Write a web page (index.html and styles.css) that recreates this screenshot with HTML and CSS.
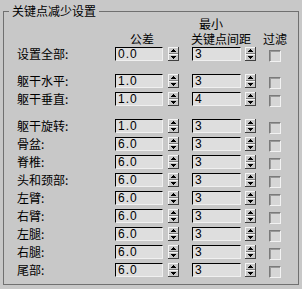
FILE: index.html
```html
<!DOCTYPE html>
<html>
<head>
<meta charset="utf-8">
<link rel="stylesheet" href="styles.css">
</head>
<body>
<fieldset class="group">
  <legend class="title">关键点减少设置</legend>
  <div class="head">
    <div class="h-tol">公差</div>
    <div class="h-min"><span class="l1">最小</span><span class="l2">关键点间距</span></div>
    <div class="h-filter">过滤</div>
  </div>
  <div class="rows">
    <div class="row"><span class="label">设置全部:</span><span class="field">0.0</span><span class="spin"><svg width="11" height="14" viewBox="0 0 11 14" shape-rendering="crispEdges"><rect width="11" height="14" fill="#c8c8c8"/><rect x="0" y="0" width="11" height="1" fill="#f4f4f4"/><rect x="0" y="0" width="1" height="14" fill="#f4f4f4"/><rect x="0" y="13" width="11" height="1" fill="#404040"/><rect x="10" y="0" width="1" height="14" fill="#404040"/><rect x="1" y="6" width="9" height="1" fill="#808080"/><rect x="1" y="7" width="9" height="1" fill="#f4f4f4"/><rect x="5" y="2" width="1" height="1" fill="#000"/><rect x="4" y="3" width="3" height="1" fill="#000"/><rect x="3" y="4" width="5" height="1" fill="#000"/><rect x="3" y="9" width="5" height="1" fill="#000"/><rect x="4" y="10" width="3" height="1" fill="#000"/><rect x="5" y="11" width="1" height="1" fill="#000"/></svg></span><span class="field f2">3</span><span class="spin"><svg width="11" height="14" viewBox="0 0 11 14" shape-rendering="crispEdges"><rect width="11" height="14" fill="#c8c8c8"/><rect x="0" y="0" width="11" height="1" fill="#f4f4f4"/><rect x="0" y="0" width="1" height="14" fill="#f4f4f4"/><rect x="0" y="13" width="11" height="1" fill="#404040"/><rect x="10" y="0" width="1" height="14" fill="#404040"/><rect x="1" y="6" width="9" height="1" fill="#808080"/><rect x="1" y="7" width="9" height="1" fill="#f4f4f4"/><rect x="5" y="2" width="1" height="1" fill="#000"/><rect x="4" y="3" width="3" height="1" fill="#000"/><rect x="3" y="4" width="5" height="1" fill="#000"/><rect x="3" y="9" width="5" height="1" fill="#000"/><rect x="4" y="10" width="3" height="1" fill="#000"/><rect x="5" y="11" width="1" height="1" fill="#000"/></svg></span><span class="check"></span></div>

    <div class="row sep"><span class="label">躯干水平:</span><span class="field">1.0</span><span class="spin"><svg width="11" height="14" viewBox="0 0 11 14" shape-rendering="crispEdges"><rect width="11" height="14" fill="#c8c8c8"/><rect x="0" y="0" width="11" height="1" fill="#f4f4f4"/><rect x="0" y="0" width="1" height="14" fill="#f4f4f4"/><rect x="0" y="13" width="11" height="1" fill="#404040"/><rect x="10" y="0" width="1" height="14" fill="#404040"/><rect x="1" y="6" width="9" height="1" fill="#808080"/><rect x="1" y="7" width="9" height="1" fill="#f4f4f4"/><rect x="5" y="2" width="1" height="1" fill="#000"/><rect x="4" y="3" width="3" height="1" fill="#000"/><rect x="3" y="4" width="5" height="1" fill="#000"/><rect x="3" y="9" width="5" height="1" fill="#000"/><rect x="4" y="10" width="3" height="1" fill="#000"/><rect x="5" y="11" width="1" height="1" fill="#000"/></svg></span><span class="field f2">3</span><span class="spin"><svg width="11" height="14" viewBox="0 0 11 14" shape-rendering="crispEdges"><rect width="11" height="14" fill="#c8c8c8"/><rect x="0" y="0" width="11" height="1" fill="#f4f4f4"/><rect x="0" y="0" width="1" height="14" fill="#f4f4f4"/><rect x="0" y="13" width="11" height="1" fill="#404040"/><rect x="10" y="0" width="1" height="14" fill="#404040"/><rect x="1" y="6" width="9" height="1" fill="#808080"/><rect x="1" y="7" width="9" height="1" fill="#f4f4f4"/><rect x="5" y="2" width="1" height="1" fill="#000"/><rect x="4" y="3" width="3" height="1" fill="#000"/><rect x="3" y="4" width="5" height="1" fill="#000"/><rect x="3" y="9" width="5" height="1" fill="#000"/><rect x="4" y="10" width="3" height="1" fill="#000"/><rect x="5" y="11" width="1" height="1" fill="#000"/></svg></span><span class="check"></span></div>

    <div class="row"><span class="label">躯干垂直:</span><span class="field">1.0</span><span class="spin"><svg width="11" height="14" viewBox="0 0 11 14" shape-rendering="crispEdges"><rect width="11" height="14" fill="#c8c8c8"/><rect x="0" y="0" width="11" height="1" fill="#f4f4f4"/><rect x="0" y="0" width="1" height="14" fill="#f4f4f4"/><rect x="0" y="13" width="11" height="1" fill="#404040"/><rect x="10" y="0" width="1" height="14" fill="#404040"/><rect x="1" y="6" width="9" height="1" fill="#808080"/><rect x="1" y="7" width="9" height="1" fill="#f4f4f4"/><rect x="5" y="2" width="1" height="1" fill="#000"/><rect x="4" y="3" width="3" height="1" fill="#000"/><rect x="3" y="4" width="5" height="1" fill="#000"/><rect x="3" y="9" width="5" height="1" fill="#000"/><rect x="4" y="10" width="3" height="1" fill="#000"/><rect x="5" y="11" width="1" height="1" fill="#000"/></svg></span><span class="field f2">4</span><span class="spin"><svg width="11" height="14" viewBox="0 0 11 14" shape-rendering="crispEdges"><rect width="11" height="14" fill="#c8c8c8"/><rect x="0" y="0" width="11" height="1" fill="#f4f4f4"/><rect x="0" y="0" width="1" height="14" fill="#f4f4f4"/><rect x="0" y="13" width="11" height="1" fill="#404040"/><rect x="10" y="0" width="1" height="14" fill="#404040"/><rect x="1" y="6" width="9" height="1" fill="#808080"/><rect x="1" y="7" width="9" height="1" fill="#f4f4f4"/><rect x="5" y="2" width="1" height="1" fill="#000"/><rect x="4" y="3" width="3" height="1" fill="#000"/><rect x="3" y="4" width="5" height="1" fill="#000"/><rect x="3" y="9" width="5" height="1" fill="#000"/><rect x="4" y="10" width="3" height="1" fill="#000"/><rect x="5" y="11" width="1" height="1" fill="#000"/></svg></span><span class="check"></span></div>

    <div class="row sep"><span class="label">躯干旋转:</span><span class="field">1.0</span><span class="spin"><svg width="11" height="14" viewBox="0 0 11 14" shape-rendering="crispEdges"><rect width="11" height="14" fill="#c8c8c8"/><rect x="0" y="0" width="11" height="1" fill="#f4f4f4"/><rect x="0" y="0" width="1" height="14" fill="#f4f4f4"/><rect x="0" y="13" width="11" height="1" fill="#404040"/><rect x="10" y="0" width="1" height="14" fill="#404040"/><rect x="1" y="6" width="9" height="1" fill="#808080"/><rect x="1" y="7" width="9" height="1" fill="#f4f4f4"/><rect x="5" y="2" width="1" height="1" fill="#000"/><rect x="4" y="3" width="3" height="1" fill="#000"/><rect x="3" y="4" width="5" height="1" fill="#000"/><rect x="3" y="9" width="5" height="1" fill="#000"/><rect x="4" y="10" width="3" height="1" fill="#000"/><rect x="5" y="11" width="1" height="1" fill="#000"/></svg></span><span class="field f2">3</span><span class="spin"><svg width="11" height="14" viewBox="0 0 11 14" shape-rendering="crispEdges"><rect width="11" height="14" fill="#c8c8c8"/><rect x="0" y="0" width="11" height="1" fill="#f4f4f4"/><rect x="0" y="0" width="1" height="14" fill="#f4f4f4"/><rect x="0" y="13" width="11" height="1" fill="#404040"/><rect x="10" y="0" width="1" height="14" fill="#404040"/><rect x="1" y="6" width="9" height="1" fill="#808080"/><rect x="1" y="7" width="9" height="1" fill="#f4f4f4"/><rect x="5" y="2" width="1" height="1" fill="#000"/><rect x="4" y="3" width="3" height="1" fill="#000"/><rect x="3" y="4" width="5" height="1" fill="#000"/><rect x="3" y="9" width="5" height="1" fill="#000"/><rect x="4" y="10" width="3" height="1" fill="#000"/><rect x="5" y="11" width="1" height="1" fill="#000"/></svg></span><span class="check"></span></div>

    <div class="row"><span class="label">骨盆:</span><span class="field">6.0</span><span class="spin"><svg width="11" height="14" viewBox="0 0 11 14" shape-rendering="crispEdges"><rect width="11" height="14" fill="#c8c8c8"/><rect x="0" y="0" width="11" height="1" fill="#f4f4f4"/><rect x="0" y="0" width="1" height="14" fill="#f4f4f4"/><rect x="0" y="13" width="11" height="1" fill="#404040"/><rect x="10" y="0" width="1" height="14" fill="#404040"/><rect x="1" y="6" width="9" height="1" fill="#808080"/><rect x="1" y="7" width="9" height="1" fill="#f4f4f4"/><rect x="5" y="2" width="1" height="1" fill="#000"/><rect x="4" y="3" width="3" height="1" fill="#000"/><rect x="3" y="4" width="5" height="1" fill="#000"/><rect x="3" y="9" width="5" height="1" fill="#000"/><rect x="4" y="10" width="3" height="1" fill="#000"/><rect x="5" y="11" width="1" height="1" fill="#000"/></svg></span><span class="field f2">3</span><span class="spin"><svg width="11" height="14" viewBox="0 0 11 14" shape-rendering="crispEdges"><rect width="11" height="14" fill="#c8c8c8"/><rect x="0" y="0" width="11" height="1" fill="#f4f4f4"/><rect x="0" y="0" width="1" height="14" fill="#f4f4f4"/><rect x="0" y="13" width="11" height="1" fill="#404040"/><rect x="10" y="0" width="1" height="14" fill="#404040"/><rect x="1" y="6" width="9" height="1" fill="#808080"/><rect x="1" y="7" width="9" height="1" fill="#f4f4f4"/><rect x="5" y="2" width="1" height="1" fill="#000"/><rect x="4" y="3" width="3" height="1" fill="#000"/><rect x="3" y="4" width="5" height="1" fill="#000"/><rect x="3" y="9" width="5" height="1" fill="#000"/><rect x="4" y="10" width="3" height="1" fill="#000"/><rect x="5" y="11" width="1" height="1" fill="#000"/></svg></span><span class="check"></span></div>

    <div class="row"><span class="label">脊椎:</span><span class="field">6.0</span><span class="spin"><svg width="11" height="14" viewBox="0 0 11 14" shape-rendering="crispEdges"><rect width="11" height="14" fill="#c8c8c8"/><rect x="0" y="0" width="11" height="1" fill="#f4f4f4"/><rect x="0" y="0" width="1" height="14" fill="#f4f4f4"/><rect x="0" y="13" width="11" height="1" fill="#404040"/><rect x="10" y="0" width="1" height="14" fill="#404040"/><rect x="1" y="6" width="9" height="1" fill="#808080"/><rect x="1" y="7" width="9" height="1" fill="#f4f4f4"/><rect x="5" y="2" width="1" height="1" fill="#000"/><rect x="4" y="3" width="3" height="1" fill="#000"/><rect x="3" y="4" width="5" height="1" fill="#000"/><rect x="3" y="9" width="5" height="1" fill="#000"/><rect x="4" y="10" width="3" height="1" fill="#000"/><rect x="5" y="11" width="1" height="1" fill="#000"/></svg></span><span class="field f2">3</span><span class="spin"><svg width="11" height="14" viewBox="0 0 11 14" shape-rendering="crispEdges"><rect width="11" height="14" fill="#c8c8c8"/><rect x="0" y="0" width="11" height="1" fill="#f4f4f4"/><rect x="0" y="0" width="1" height="14" fill="#f4f4f4"/><rect x="0" y="13" width="11" height="1" fill="#404040"/><rect x="10" y="0" width="1" height="14" fill="#404040"/><rect x="1" y="6" width="9" height="1" fill="#808080"/><rect x="1" y="7" width="9" height="1" fill="#f4f4f4"/><rect x="5" y="2" width="1" height="1" fill="#000"/><rect x="4" y="3" width="3" height="1" fill="#000"/><rect x="3" y="4" width="5" height="1" fill="#000"/><rect x="3" y="9" width="5" height="1" fill="#000"/><rect x="4" y="10" width="3" height="1" fill="#000"/><rect x="5" y="11" width="1" height="1" fill="#000"/></svg></span><span class="check"></span></div>

    <div class="row"><span class="label">头和颈部:</span><span class="field">6.0</span><span class="spin"><svg width="11" height="14" viewBox="0 0 11 14" shape-rendering="crispEdges"><rect width="11" height="14" fill="#c8c8c8"/><rect x="0" y="0" width="11" height="1" fill="#f4f4f4"/><rect x="0" y="0" width="1" height="14" fill="#f4f4f4"/><rect x="0" y="13" width="11" height="1" fill="#404040"/><rect x="10" y="0" width="1" height="14" fill="#404040"/><rect x="1" y="6" width="9" height="1" fill="#808080"/><rect x="1" y="7" width="9" height="1" fill="#f4f4f4"/><rect x="5" y="2" width="1" height="1" fill="#000"/><rect x="4" y="3" width="3" height="1" fill="#000"/><rect x="3" y="4" width="5" height="1" fill="#000"/><rect x="3" y="9" width="5" height="1" fill="#000"/><rect x="4" y="10" width="3" height="1" fill="#000"/><rect x="5" y="11" width="1" height="1" fill="#000"/></svg></span><span class="field f2">3</span><span class="spin"><svg width="11" height="14" viewBox="0 0 11 14" shape-rendering="crispEdges"><rect width="11" height="14" fill="#c8c8c8"/><rect x="0" y="0" width="11" height="1" fill="#f4f4f4"/><rect x="0" y="0" width="1" height="14" fill="#f4f4f4"/><rect x="0" y="13" width="11" height="1" fill="#404040"/><rect x="10" y="0" width="1" height="14" fill="#404040"/><rect x="1" y="6" width="9" height="1" fill="#808080"/><rect x="1" y="7" width="9" height="1" fill="#f4f4f4"/><rect x="5" y="2" width="1" height="1" fill="#000"/><rect x="4" y="3" width="3" height="1" fill="#000"/><rect x="3" y="4" width="5" height="1" fill="#000"/><rect x="3" y="9" width="5" height="1" fill="#000"/><rect x="4" y="10" width="3" height="1" fill="#000"/><rect x="5" y="11" width="1" height="1" fill="#000"/></svg></span><span class="check"></span></div>

    <div class="row"><span class="label">左臂:</span><span class="field">6.0</span><span class="spin"><svg width="11" height="14" viewBox="0 0 11 14" shape-rendering="crispEdges"><rect width="11" height="14" fill="#c8c8c8"/><rect x="0" y="0" width="11" height="1" fill="#f4f4f4"/><rect x="0" y="0" width="1" height="14" fill="#f4f4f4"/><rect x="0" y="13" width="11" height="1" fill="#404040"/><rect x="10" y="0" width="1" height="14" fill="#404040"/><rect x="1" y="6" width="9" height="1" fill="#808080"/><rect x="1" y="7" width="9" height="1" fill="#f4f4f4"/><rect x="5" y="2" width="1" height="1" fill="#000"/><rect x="4" y="3" width="3" height="1" fill="#000"/><rect x="3" y="4" width="5" height="1" fill="#000"/><rect x="3" y="9" width="5" height="1" fill="#000"/><rect x="4" y="10" width="3" height="1" fill="#000"/><rect x="5" y="11" width="1" height="1" fill="#000"/></svg></span><span class="field f2">3</span><span class="spin"><svg width="11" height="14" viewBox="0 0 11 14" shape-rendering="crispEdges"><rect width="11" height="14" fill="#c8c8c8"/><rect x="0" y="0" width="11" height="1" fill="#f4f4f4"/><rect x="0" y="0" width="1" height="14" fill="#f4f4f4"/><rect x="0" y="13" width="11" height="1" fill="#404040"/><rect x="10" y="0" width="1" height="14" fill="#404040"/><rect x="1" y="6" width="9" height="1" fill="#808080"/><rect x="1" y="7" width="9" height="1" fill="#f4f4f4"/><rect x="5" y="2" width="1" height="1" fill="#000"/><rect x="4" y="3" width="3" height="1" fill="#000"/><rect x="3" y="4" width="5" height="1" fill="#000"/><rect x="3" y="9" width="5" height="1" fill="#000"/><rect x="4" y="10" width="3" height="1" fill="#000"/><rect x="5" y="11" width="1" height="1" fill="#000"/></svg></span><span class="check"></span></div>

    <div class="row"><span class="label">右臂:</span><span class="field">6.0</span><span class="spin"><svg width="11" height="14" viewBox="0 0 11 14" shape-rendering="crispEdges"><rect width="11" height="14" fill="#c8c8c8"/><rect x="0" y="0" width="11" height="1" fill="#f4f4f4"/><rect x="0" y="0" width="1" height="14" fill="#f4f4f4"/><rect x="0" y="13" width="11" height="1" fill="#404040"/><rect x="10" y="0" width="1" height="14" fill="#404040"/><rect x="1" y="6" width="9" height="1" fill="#808080"/><rect x="1" y="7" width="9" height="1" fill="#f4f4f4"/><rect x="5" y="2" width="1" height="1" fill="#000"/><rect x="4" y="3" width="3" height="1" fill="#000"/><rect x="3" y="4" width="5" height="1" fill="#000"/><rect x="3" y="9" width="5" height="1" fill="#000"/><rect x="4" y="10" width="3" height="1" fill="#000"/><rect x="5" y="11" width="1" height="1" fill="#000"/></svg></span><span class="field f2">3</span><span class="spin"><svg width="11" height="14" viewBox="0 0 11 14" shape-rendering="crispEdges"><rect width="11" height="14" fill="#c8c8c8"/><rect x="0" y="0" width="11" height="1" fill="#f4f4f4"/><rect x="0" y="0" width="1" height="14" fill="#f4f4f4"/><rect x="0" y="13" width="11" height="1" fill="#404040"/><rect x="10" y="0" width="1" height="14" fill="#404040"/><rect x="1" y="6" width="9" height="1" fill="#808080"/><rect x="1" y="7" width="9" height="1" fill="#f4f4f4"/><rect x="5" y="2" width="1" height="1" fill="#000"/><rect x="4" y="3" width="3" height="1" fill="#000"/><rect x="3" y="4" width="5" height="1" fill="#000"/><rect x="3" y="9" width="5" height="1" fill="#000"/><rect x="4" y="10" width="3" height="1" fill="#000"/><rect x="5" y="11" width="1" height="1" fill="#000"/></svg></span><span class="check"></span></div>

    <div class="row"><span class="label">左腿:</span><span class="field">6.0</span><span class="spin"><svg width="11" height="14" viewBox="0 0 11 14" shape-rendering="crispEdges"><rect width="11" height="14" fill="#c8c8c8"/><rect x="0" y="0" width="11" height="1" fill="#f4f4f4"/><rect x="0" y="0" width="1" height="14" fill="#f4f4f4"/><rect x="0" y="13" width="11" height="1" fill="#404040"/><rect x="10" y="0" width="1" height="14" fill="#404040"/><rect x="1" y="6" width="9" height="1" fill="#808080"/><rect x="1" y="7" width="9" height="1" fill="#f4f4f4"/><rect x="5" y="2" width="1" height="1" fill="#000"/><rect x="4" y="3" width="3" height="1" fill="#000"/><rect x="3" y="4" width="5" height="1" fill="#000"/><rect x="3" y="9" width="5" height="1" fill="#000"/><rect x="4" y="10" width="3" height="1" fill="#000"/><rect x="5" y="11" width="1" height="1" fill="#000"/></svg></span><span class="field f2">3</span><span class="spin"><svg width="11" height="14" viewBox="0 0 11 14" shape-rendering="crispEdges"><rect width="11" height="14" fill="#c8c8c8"/><rect x="0" y="0" width="11" height="1" fill="#f4f4f4"/><rect x="0" y="0" width="1" height="14" fill="#f4f4f4"/><rect x="0" y="13" width="11" height="1" fill="#404040"/><rect x="10" y="0" width="1" height="14" fill="#404040"/><rect x="1" y="6" width="9" height="1" fill="#808080"/><rect x="1" y="7" width="9" height="1" fill="#f4f4f4"/><rect x="5" y="2" width="1" height="1" fill="#000"/><rect x="4" y="3" width="3" height="1" fill="#000"/><rect x="3" y="4" width="5" height="1" fill="#000"/><rect x="3" y="9" width="5" height="1" fill="#000"/><rect x="4" y="10" width="3" height="1" fill="#000"/><rect x="5" y="11" width="1" height="1" fill="#000"/></svg></span><span class="check"></span></div>

    <div class="row"><span class="label">右腿:</span><span class="field">6.0</span><span class="spin"><svg width="11" height="14" viewBox="0 0 11 14" shape-rendering="crispEdges"><rect width="11" height="14" fill="#c8c8c8"/><rect x="0" y="0" width="11" height="1" fill="#f4f4f4"/><rect x="0" y="0" width="1" height="14" fill="#f4f4f4"/><rect x="0" y="13" width="11" height="1" fill="#404040"/><rect x="10" y="0" width="1" height="14" fill="#404040"/><rect x="1" y="6" width="9" height="1" fill="#808080"/><rect x="1" y="7" width="9" height="1" fill="#f4f4f4"/><rect x="5" y="2" width="1" height="1" fill="#000"/><rect x="4" y="3" width="3" height="1" fill="#000"/><rect x="3" y="4" width="5" height="1" fill="#000"/><rect x="3" y="9" width="5" height="1" fill="#000"/><rect x="4" y="10" width="3" height="1" fill="#000"/><rect x="5" y="11" width="1" height="1" fill="#000"/></svg></span><span class="field f2">3</span><span class="spin"><svg width="11" height="14" viewBox="0 0 11 14" shape-rendering="crispEdges"><rect width="11" height="14" fill="#c8c8c8"/><rect x="0" y="0" width="11" height="1" fill="#f4f4f4"/><rect x="0" y="0" width="1" height="14" fill="#f4f4f4"/><rect x="0" y="13" width="11" height="1" fill="#404040"/><rect x="10" y="0" width="1" height="14" fill="#404040"/><rect x="1" y="6" width="9" height="1" fill="#808080"/><rect x="1" y="7" width="9" height="1" fill="#f4f4f4"/><rect x="5" y="2" width="1" height="1" fill="#000"/><rect x="4" y="3" width="3" height="1" fill="#000"/><rect x="3" y="4" width="5" height="1" fill="#000"/><rect x="3" y="9" width="5" height="1" fill="#000"/><rect x="4" y="10" width="3" height="1" fill="#000"/><rect x="5" y="11" width="1" height="1" fill="#000"/></svg></span><span class="check"></span></div>

    <div class="row"><span class="label">尾部:</span><span class="field">6.0</span><span class="spin"><svg width="11" height="14" viewBox="0 0 11 14" shape-rendering="crispEdges"><rect width="11" height="14" fill="#c8c8c8"/><rect x="0" y="0" width="11" height="1" fill="#f4f4f4"/><rect x="0" y="0" width="1" height="14" fill="#f4f4f4"/><rect x="0" y="13" width="11" height="1" fill="#404040"/><rect x="10" y="0" width="1" height="14" fill="#404040"/><rect x="1" y="6" width="9" height="1" fill="#808080"/><rect x="1" y="7" width="9" height="1" fill="#f4f4f4"/><rect x="5" y="2" width="1" height="1" fill="#000"/><rect x="4" y="3" width="3" height="1" fill="#000"/><rect x="3" y="4" width="5" height="1" fill="#000"/><rect x="3" y="9" width="5" height="1" fill="#000"/><rect x="4" y="10" width="3" height="1" fill="#000"/><rect x="5" y="11" width="1" height="1" fill="#000"/></svg></span><span class="field f2">3</span><span class="spin"><svg width="11" height="14" viewBox="0 0 11 14" shape-rendering="crispEdges"><rect width="11" height="14" fill="#c8c8c8"/><rect x="0" y="0" width="11" height="1" fill="#f4f4f4"/><rect x="0" y="0" width="1" height="14" fill="#f4f4f4"/><rect x="0" y="13" width="11" height="1" fill="#404040"/><rect x="10" y="0" width="1" height="14" fill="#404040"/><rect x="1" y="6" width="9" height="1" fill="#808080"/><rect x="1" y="7" width="9" height="1" fill="#f4f4f4"/><rect x="5" y="2" width="1" height="1" fill="#000"/><rect x="4" y="3" width="3" height="1" fill="#000"/><rect x="3" y="4" width="5" height="1" fill="#000"/><rect x="3" y="9" width="5" height="1" fill="#000"/><rect x="4" y="10" width="3" height="1" fill="#000"/><rect x="5" y="11" width="1" height="1" fill="#000"/></svg></span><span class="check"></span></div>
  </div>
</fieldset>
</body>
</html>
```

FILE: styles.css
```css
html, body {
  margin: 0;
  padding: 0;
  background: #c8c8c8;
}
body {
  width: 302px;
  height: 289px;
  overflow: hidden;
  font-family: "Noto Sans CJK SC", "Liberation Sans", sans-serif;
  font-size: 12px;
  color: #000;
}
.group {
  box-sizing: border-box;
  margin: 4px 0 0 3px;
  width: 296px;
  height: 281px;
  padding: 0 0 0 5px;
  border: 1px solid #707070;
  min-width: 0;
}
.title {
  padding: 0 3px;
  line-height: 14px;
  font-size: 12px;
}
.head {
  display: grid;
  grid-template-columns: 98px 53px 24px 53px 24px 12px;
  height: 29px;
  margin-left: 8px;
  align-items: end;
  padding-bottom: 2px;
  box-sizing: border-box;
  line-height: 12px;
  white-space: nowrap;
}
.h-tol {
  grid-column: 2;
  padding-left: 15px;
}
.h-min {
  grid-column: 4;
  display: flex;
  flex-direction: column;
  gap: 3px;
}
.h-min .l1 {
  padding-left: 7px;
}
.h-min .l2 {
  margin-left: -1px;
}
.h-filter {
  grid-column: 6;
  margin-left: -6px;
}
.rows {
  display: flex;
  flex-direction: column;
  gap: 4px;
  margin-left: 8px;
}
.row {
  display: grid;
  grid-template-columns: 98px 53px 24px 53px 24px 12px;
  height: 14px;
  align-items: start;
}
.row.sep {
  margin-top: 9px;
}
.label {
  line-height: 14px;
  white-space: nowrap;
}
.field {
  box-sizing: border-box;
  width: 48px;
  height: 14px;
  border: 1px solid;
  border-color: #000 #f0f0f0 #f0f0f0 #000;
  background: #dedede;
  padding-left: 2px;
  font-family: "Liberation Sans", sans-serif;
  font-size: 12px;
  line-height: 12px;
  letter-spacing: 1px;
}
.field.f2 {
  width: 49px;
  letter-spacing: 0;
}
.spin {
  display: block;
  width: 11px;
  height: 14px;
}
.spin svg {
  display: block;
}
.check {
  box-sizing: border-box;
  width: 12px;
  height: 12px;
  margin-top: 3px;
  border: 1px solid;
  border-color: #7a7a7a #f2f2f2 #f2f2f2 #7a7a7a;
  box-shadow: inset 1px 1px 0 #9a9a9a;
  background: #d6d6d6;
}
```
